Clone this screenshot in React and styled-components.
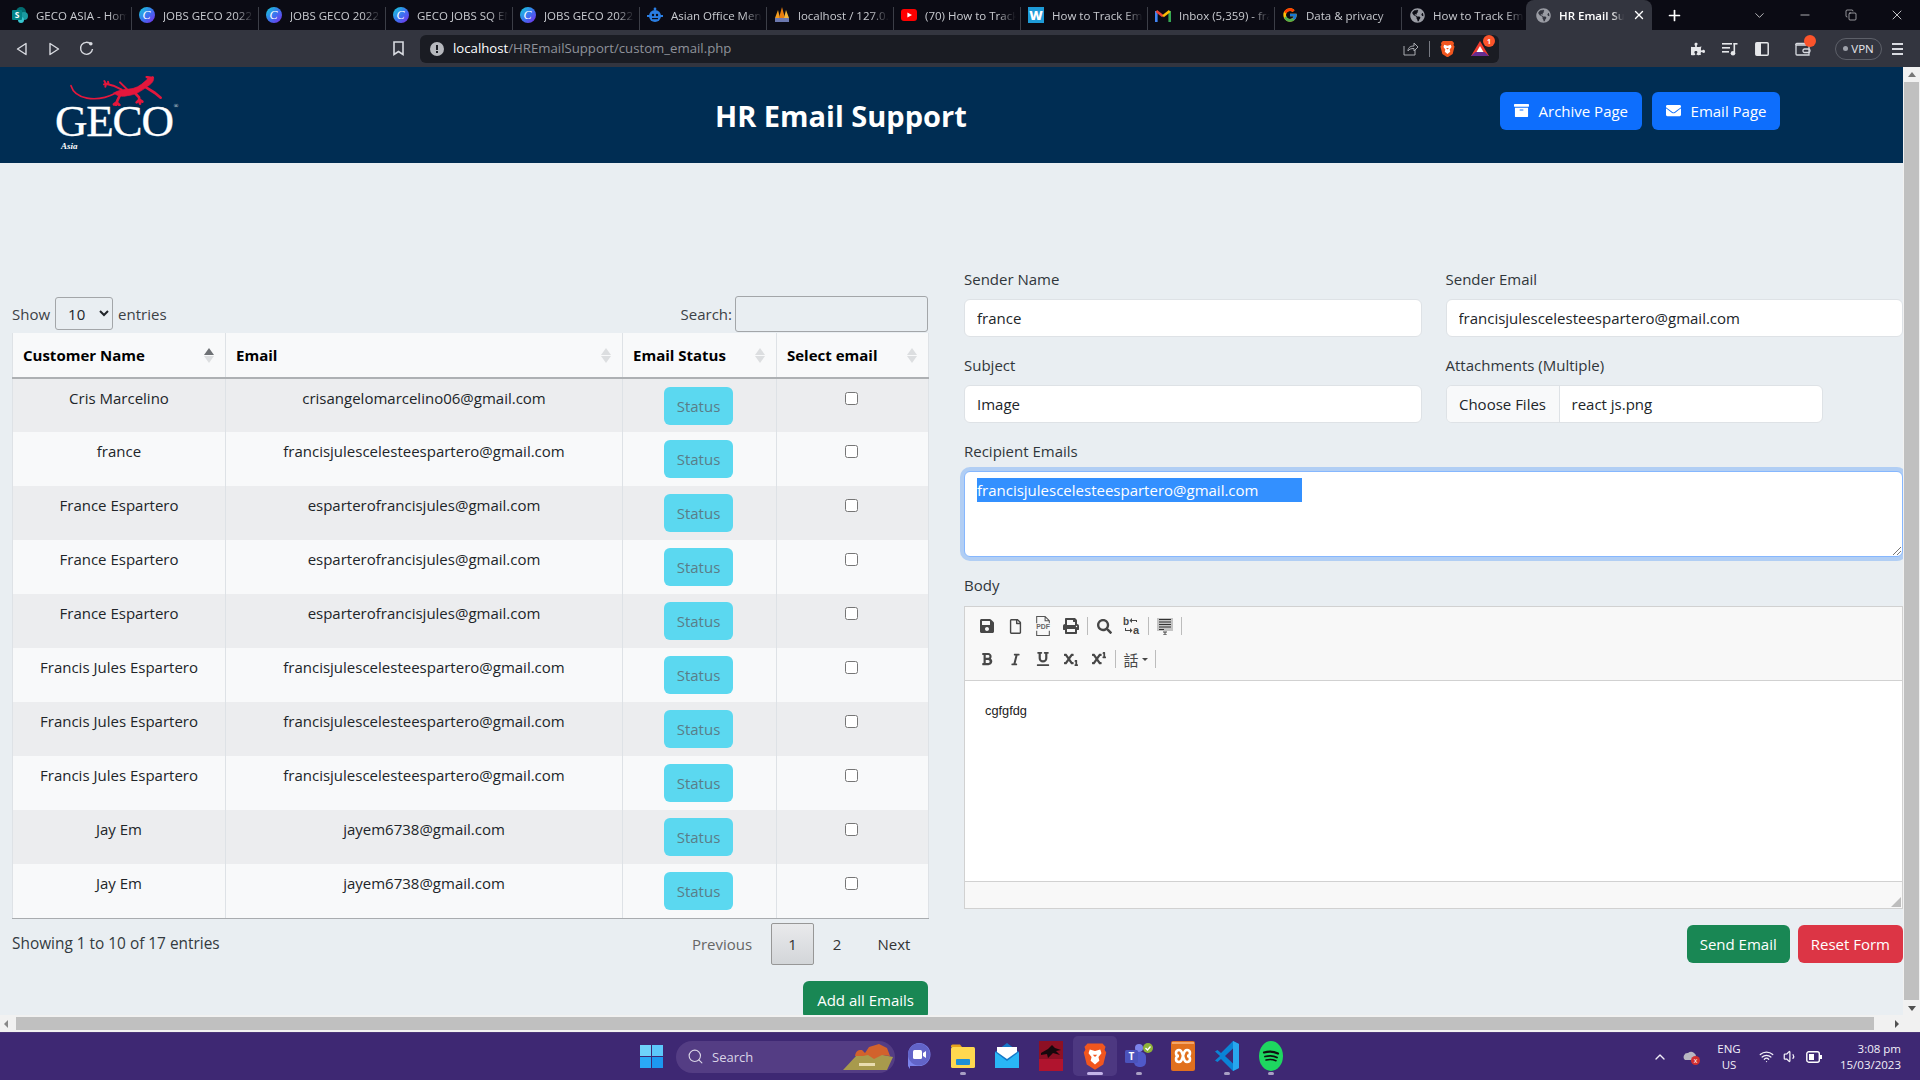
import React from 'react';
import styled, { createGlobalStyle } from 'styled-components';
import { FaGlobeAmericas, FaPuzzlePiece, FaArchive, FaEnvelope, FaSave, FaPrint, FaSearch, FaBold, FaItalic, FaUnderline, FaSubscript, FaSuperscript, FaRegFile } from 'react-icons/fa';
import { FcGoogle } from 'react-icons/fc';
import { Search as SearchIcon, ChevronUp, ChevronDown, Wifi, Volume1, Minus, X, Plus, Copy } from 'lucide-react';

const UI = '"Open Sans", "Noto Sans", sans-serif';

const Global = createGlobalStyle`
  html, body { margin: 0; padding: 0; overflow: hidden; background: #e9eef2; }
  * { box-sizing: border-box; }
  body { font-family: ${UI}; color: #212529; }
`;

const Screen = styled.div`
  width: 1920px; height: 1080px; display: flex; flex-direction: column; overflow: hidden;
`;

/* ---------- browser tabs ---------- */
const TabStrip = styled.div`
  height: 30px; flex: none; display: flex; align-items: stretch; padding-left: 5px; background: #0b0b14;
`;
const Tab = styled.div`
  position: relative; flex: none; width: ${p => p.$active ? 126 : 127}px; display: flex; align-items: center; gap: 8px; padding-left: ${p => p.$active ? 9 : 7}px; padding-right: ${p => p.$active ? '6px' : '5px'};
  margin-left: ${p => p.$active ? -3 : 0}px;
  background: ${p => p.$active ? '#33353f' : 'transparent'};
  border-radius: ${p => p.$active ? '8px 8px 0 0' : '0'};
  color: ${p => p.$active ? '#fff' : '#c9cbd0'};
  font-size: 11.5px; font-weight: ${p => p.$active ? 600 : 400};
  ${p => p.$sep ? `&::after { content: ''; position: absolute; right: 0; top: 7px; bottom: 0; width: 1px; background: #3c3e47; }` : ''}
`;
const TabIcon = styled.span`
  flex: none; width: 16px; height: 16px; display: flex; align-items: center; justify-content: center;
`;
const TabTitle = styled.span`
  flex: 1; min-width: 0; white-space: nowrap; overflow: hidden;
  -webkit-mask-image: linear-gradient(to right, #000 80%, transparent 100%);
  mask-image: linear-gradient(to right, #000 80%, transparent 100%);
`;
const TabClose = styled.span`flex: none; display: flex; color: #fff;`;
const NewTab = styled.span`flex: none; width: 40px; margin-left: 2px; display: flex; align-items: center; justify-content: center; color: #fff;`;
const WindowControls = styled.div`
  margin-left: 42px; display: flex; align-items: center; color: #f0f0f2;
`;
const WinButton = styled.span`width: 46px; display: flex; justify-content: center;`;

/* ---------- browser toolbar ---------- */
const Toolbar = styled.div`
  height: 37px; flex: none; display: flex; align-items: center; background: #33353f; padding-left: 6px; color: #d8dae0;
`;
const ToolIcon = styled.span`
  flex: none; width: ${p => p.$w || 32}px; margin-left: ${p => p.$ml || 0}px; display: flex; align-items: center; justify-content: center; position: relative;
`;
const UrlBar = styled.div`
  flex: none; width: 1079px; height: 28px; margin-left: 10px; border-radius: 6px; background: #1a1c23; display: flex; align-items: center; padding: 0 2px 0 10px;
  font-size: 13.2px; color: #8f929a;
`;
const UrlHost = styled.span`color: #fff;`;
const UrlPath = styled.span`margin: -2px 0 0 9px; flex: 1;`;
const UrlSep = styled.span`width: 1px; height: 16px; background: #777a82; margin: 0 10px;`;
const BadgeDot = styled.span`
  position: absolute; top: ${p => p.$t}px; right: ${p => p.$r}px; width: ${p => p.$s}px; height: ${p => p.$s}px; border-radius: 50%; background: #fb542b; color: #fff; font-size: 7px; font-weight: 700; display: flex; align-items: center; justify-content: center;
`;
const Vpn = styled.span`
  flex: none; width: 47px; height: 22px; margin-left: 16px; border: 1px solid #5d6069; border-radius: 11px; display: flex; align-items: center; justify-content: center; gap: 3px; font-size: 11.5px; color: #e5e6ea;
`;
const VpnDot = styled.i`width: 5px; height: 5px; border-radius: 50%; background: #9ea1aa;`;

/* ---------- viewport ---------- */
const Viewport = styled.div`
  flex: 1; min-height: 0; display: grid; grid-template-columns: 1fr 17px; grid-template-rows: 1fr 17px; background: #f1f1f1;
`;
const Page = styled.div`overflow: hidden; background: #e9eef2; min-height: 0;`;
const VBar = styled.div`
  background: #f1f1f1; display: flex; flex-direction: column; align-items: center; padding: 5px 0 4px; color: #6b6b6b;
`;
const VThumb = styled.div`flex: 1; width: 15px; margin: 5px 0 6px; background: #c0c0c0;`;
const HBar = styled.div`
  background: #f1f1f1; display: flex; align-items: center; padding: 0 4px; color: #6b6b6b;
`;
const HThumb = styled.div`flex: 1; height: 13px; margin: 0 21px 0 8px; background: #c0c0c0;`;
const Corner = styled.div`background: #f1f1f1;`;
const Tri = styled.i`
  width: 0; height: 0; display: block;
  ${p => p.$dir === 'up' ? 'border: 4px solid transparent; border-top: 0; border-bottom: 5px solid #777;' : ''}
  ${p => p.$dir === 'down' ? 'border: 4px solid transparent; border-bottom: 0; border-top: 5px solid #505050;' : ''}
  ${p => p.$dir === 'left' ? 'border: 4px solid transparent; border-left: 0; border-right: 4px solid #888;' : ''}
  ${p => p.$dir === 'right' ? 'border: 4px solid transparent; border-right: 0; border-left: 4px solid #505050;' : ''}
`;

/* ---------- header ---------- */
const Header = styled.header`
  height: 96px; background: #002d53; display: flex; align-items: center; padding-left: 55px; padding-right: 123px;
`;
const Logo = styled.div`width: 125px; height: 76px; margin-top: -3px; display: flex; flex-direction: column; color: #fff; font-family: "Liberation Serif", serif;`;
const LogoWord = styled.div`font-size: 45px; line-height: 30px; height: 30px; letter-spacing: -1.2px; white-space: nowrap; -webkit-text-stroke: 0.35px #fff;`;
const LogoMark = styled.sup`font-size: 6px; line-height: 0; vertical-align: 28px; margin-left: 1px; letter-spacing: 0; -webkit-text-stroke: 0;`;
const LogoSub = styled.div`font-size: 9px; line-height: 10px; font-style: italic; font-weight: 700; margin: 5px 0 0 6px;`;
const LizardSvg = styled.svg`display: block; margin-left: -15px; flex: none;`;
const Title = styled.h1`margin: 2px 0 0 535px; font-size: 29px; line-height: 40px; font-weight: 700; color: #fff; white-space: nowrap;`;
const HeaderActions = styled.div`margin: -9px 0 0 auto; display: flex; gap: 10px;`;
const Btn = styled.button`
  height: 38px; border: 0; border-radius: 6px; padding: 0 ${p => p.$px || 13}px; display: inline-flex; align-items: center; justify-content: center; gap: 10px;
  font: 400 15px/24px ${UI}; color: #fff; white-space: nowrap;
  background: ${p => ({ primary: '#0d6efd', success: '#198754', danger: '#dc3545' }[p.$kind])};
`;

/* ---------- main ---------- */
const Main = styled.main`display: flex; padding-left: 12px;`;
const LeftCol = styled.section`flex: none; width: 916px; padding-top: 134px;`;
const RightCol = styled.section`flex: none; width: 939px; margin-left: 36px; padding-top: 104px;`;

const TableTools = styled.div`display: flex; justify-content: space-between; height: 36px; font-size: 15px;`;
const Inline = styled.label`display: flex; align-items: center; gap: 3px; height: 33px; color: #3c4146;`;
const LenSelect = styled.select`
  width: 58px; height: 33px; margin: 0 2px 0 2px; padding-left: 8px; border: 1px solid #a3a6a9; border-radius: 3px; background: transparent; font: 15px ${UI}; color: #212529;
`;
const SearchBox = styled.input`
  width: 193px; height: 36px; border: 1px solid #a3a6a9; border-radius: 3px; background: transparent;
`;
const Table = styled.table`
  width: 916px; table-layout: fixed; border-collapse: collapse; font-size: 15px;
`;
const Th = styled.th`
  width: ${p => p.$w}px; height: 45px; padding: 0 11px 0 10px; background: #f8f9fa; font-weight: 700; text-align: left; color: #000;
  border-left: 1px solid #dee2e6; border-right: 1px solid #dee2e6; border-bottom: 2px solid #adb0b3;
`;
const ThInner = styled.div`display: flex; align-items: center; justify-content: space-between; white-space: nowrap;`;
const Sorter = styled.span`display: flex; flex-direction: column; gap: 1px;`;
const SortTri = styled.i`
  width: 0; height: 0; display: block; border-left: 5px solid transparent; border-right: 5px solid transparent;
  ${p => p.$up ? 'border-bottom' : 'border-top'}: 7px solid ${p => p.$dark ? '#6e7175' : '#dcdee0'};
`;
const Tr = styled.tr`background: ${p => p.$odd ? '#ecedef' : '#f8f9fa'}; height: 54px;`;
const Td = styled.td`
  padding: 7px 8px 0; vertical-align: top; text-align: center; height: 54px; line-height: 24px;
  border-left: 1px solid #dee2e6; border-right: 1px solid #dee2e6;
  ${p => p.$last ? 'border-bottom: 1px solid #a9acaf;' : ''}
`;
const StatusCell = styled(Td)`padding: 8px 9px 0 7px;`;
const CheckCell = styled(Td)`padding: 13px 10px 0 8px; line-height: 13px;`;
const StatusBtn = styled.button`
  width: 69px; height: 38px; border: 0; border-radius: 6px; background: #5bd8f0; color: #5a7d88; font: 15px ${UI};
`;
const Check = styled.input`width: 13px; height: 13px; margin: 0; display: inline-block;`;

const TableFoot = styled.div`display: flex; justify-content: space-between; padding-top: 4px; height: 46px; font-size: 15px;`;
const Info = styled.div`line-height: 42px; color: #333a40; font-size: 15.4px;`;
const Pager = styled.nav`display: flex; align-items: stretch;`;
const PageBtn = styled.span`
  width: ${p => p.$w}px; height: 42px; margin-right: ${p => p.$mr || 0}px; display: flex; align-items: center; justify-content: center; border-radius: 2px;
  color: ${p => p.$muted ? '#666' : '#333'}; border: 1px solid ${p => p.$cur ? '#979797' : 'transparent'};
  background: ${p => p.$cur ? 'linear-gradient(#e9eaec, #d3d6d9)' : 'transparent'};
`;
const AddRow = styled.div`display: flex; justify-content: flex-end; margin-top: 16px;`;

/* ---------- form ---------- */
const FormGrid = styled.div`display: grid; grid-template-columns: 1fr 1fr; column-gap: 24px; row-gap: 16px;`;
const Field = styled.div`grid-column: ${p => p.$wide ? '1 / -1' : 'auto'}; min-width: 0;`;
const Label = styled.label`display: block; font-size: 15px; line-height: 24px; margin-bottom: ${p => p.$mb || 8}px; color: #30363b;`;
const Input = styled.input`
  display: block; width: 100%; height: 38px; padding: 0 12px; border: 1px solid #dee2e6; border-radius: 6px; background: #fff; font: 15px ${UI}; color: #212529;
`;
const FileBox = styled.div`
  width: 377px; height: 38px; border: 1px solid #dee2e6; border-radius: 6px; background: #fff; display: flex; align-items: center; overflow: hidden; font-size: 15px;
`;
const FileBtn = styled.span`height: 100%; width: 113px; display: flex; align-items: center; justify-content: center; background: #f8f9fa; border-right: 1px solid #dee2e6;`;
const FileName = styled.span`margin-left: 12px;`;
const Recipient = styled.div`
  position: relative; height: 86px; padding: 6px 12px; background: #fff; border: 1px solid #86b7fe; border-radius: 6px; box-shadow: 0 0 0 4px rgba(13,110,253,.25); font-size: 15px; line-height: 24px;
`;
const Selected = styled.span`display: inline-block; width: 325px; background: #3390ff; color: #fff; white-space: nowrap;`;
const Grip = styled.svg`position: absolute; right: 1px; bottom: 1px;`;

const Editor = styled.div`height: 303px; border: 1px solid #d1d1d1; display: flex; flex-direction: column; background: #fff;`;
const EdTools = styled.div`
  height: 74px; flex: none; background: #f8f8f8; border-bottom: 1px solid #d1d1d1; padding: 5px 0 0 8px; display: flex; flex-direction: column; gap: 5px;
`;
const EdRow = styled.div`display: flex; align-items: center; height: 28px;`;
const EdBtn = styled.span`
  width: ${p => p.$w || 28}px; height: 28px; flex: none; display: flex; align-items: center; justify-content: center; gap: 3px; color: #474747; font-family: "Noto Sans CJK SC", sans-serif; font-size: 15px;
`;
const EdSep = styled.i`width: 1px; height: 18px; margin: 0 2px; background: #bcbcbc; flex: none;`;
const EdCaret = styled.i`width: 0; height: 0; border: 3px solid transparent; border-bottom: 0; border-top: 3px solid #474747;`;
const EdBody = styled.div`flex: 1; padding: 20px 20px; font: 12.8px/20px "Liberation Sans", Arial, sans-serif; color: #222;`;
const EdStatus = styled.div`
  position: relative; height: 27px; flex: none; background: #f8f8f8; border-top: 1px solid #d1d1d1; 
`;
const FormActions = styled.div`display: flex; justify-content: flex-end; gap: 8px; margin-top: 16px;`;

/* ---------- taskbar ---------- */
const Taskbar = styled.footer`
  height: 48px; flex: none; background: #3e2873; display: flex; align-items: center; padding-left: 640px; padding-right: 19px; color: #fff; border-top: 1px solid #4a3579;
`;
const StartGrid = styled.div`display: grid; grid-template-columns: 11px 11px; grid-auto-rows: 11px; gap: 1px; flex: none;`;
const StartPane = styled.i`background: ${p => p.$c};`;
const SearchPill = styled.div`
  flex: none; width: 219px; height: 32px; margin-left: 13px; border-radius: 16px; background: #543d84; display: flex; align-items: center; padding-left: 11px; gap: 8px; font-size: 13px; color: #d9d4e6; position: relative; overflow: hidden;
`;
const PillArt = styled.svg`margin-left: auto; margin-right: 2px;`;
const AppSlot = styled.div`
  position: relative; flex: none; width: 44px; height: 40px; display: flex; align-items: center; justify-content: center; border-radius: 5px; margin-top: -1px;
  background: ${p => p.$active ? '#4d3881' : 'transparent'};
`;
const Indicator = styled.i`
  position: absolute; bottom: 1px; left: 50%; transform: translateX(-50%); height: 3px; border-radius: 2px; width: ${p => p.$active ? 16 : 6}px; background: ${p => p.$active ? '#c3b3e8' : '#a99fc4'};
`;
const AppStart = styled.div`flex: none; margin-left: 2px; display: flex;`;
const Tray = styled.div`margin-left: auto; display: flex; align-items: center; font-size: 11.5px; line-height: 16px; color: #f2eff8;`;
const TrayIcon = styled.span`display: flex; width: ${p => p.$w}px; margin-left: ${p => p.$ml || 0}px; justify-content: center;`;
const Lang = styled.div`width: 34px; margin: 0 8px 0 4px; text-align: center;`;
const Clock = styled.div`margin-left: 7px; width: 68px; text-align: right;`;

/* ---------- drawn icons ---------- */
const SharePoint = () => (
  <svg width="16" height="16" viewBox="0 0 16 16"><circle cx="9" cy="5" r="5" fill="#036c70"/><circle cx="12" cy="9" r="4" fill="#1a9ba1"/><circle cx="9" cy="13" r="3" fill="#37c6d0"/><rect x="0" y="3" width="10" height="10" rx="1" fill="#038387"/><text x="5" y="11.3" fontSize="8.5" fontWeight="700" fill="#fff" textAnchor="middle" fontFamily="Open Sans">S</text></svg>
);
const Canva = ({ id }) => (
  <svg width="16" height="16" viewBox="0 0 16 16"><defs><linearGradient id={id} x1="0" y1="0" x2="1" y2="1"><stop offset="0" stopColor="#12d2d8"/><stop offset=".55" stopColor="#3f6df0"/><stop offset="1" stopColor="#7d2ae8"/></linearGradient></defs><circle cx="8" cy="8" r="8" fill={`url(#${id})`}/><text x="7.6" y="12" fontSize="12" fontStyle="italic" fill="#fff" textAnchor="middle" fontFamily="Liberation Serif">C</text></svg>
);
const AsianIcon = () => (
  <svg width="16" height="16" viewBox="0 0 16 16"><circle cx="8" cy="9" r="6" fill="#2a7de1"/><circle cx="8" cy="2" r="1.4" fill="#2a7de1"/><rect x="0" y="8" width="3" height="2" fill="#2a7de1"/><rect x="13" y="8" width="3" height="2" fill="#2a7de1"/><circle cx="6" cy="8" r="1.2" fill="#0b0b14"/><circle cx="10" cy="8" r="1.2" fill="#0b0b14"/><rect x="5" y="11" width="6" height="1.2" fill="#0b0b14"/></svg>
);
const PmaIcon = () => (
  <svg width="16" height="16" viewBox="0 0 16 16"><path d="M1 11 4 3 6 11Z" fill="#f39c1f"/><path d="M5 11 8 0 11 11Z" fill="#e87d0d"/><path d="M10 11 12 3 15 11Z" fill="#f6b73c"/><rect x="1" y="11" width="14" height="4" fill="#6c78af"/></svg>
);
const Youtube = () => (
  <svg width="16" height="12" viewBox="0 0 16 12"><rect width="16" height="12" rx="3" fill="#f00"/><path d="M6.4 3.4 11 6 6.4 8.6Z" fill="#fff"/></svg>
);
const WordIcon = () => (
  <svg width="16" height="16" viewBox="0 0 16 16"><rect width="16" height="16" fill="#1e9bd7"/><text x="8" y="13" fontSize="13" fontWeight="800" fill="#fff" textAnchor="middle" fontFamily="Open Sans">W</text></svg>
);
const Gmail = () => (
  <svg width="16" height="13" viewBox="0 0 16 13" fill="none" strokeWidth="2.6"><path d="M1.3 13V2" stroke="#4285f4"/><path d="M14.7 13V2" stroke="#34a853"/><path d="M1.3 2 8 7.2" stroke="#ea4335"/><path d="M8 7.2 14.7 2" stroke="#fbbc05"/></svg>
);
const Globe = () => <FaGlobeAmericas size={15} color="#9a9ca4" />;
const Back = () => <svg width="12" height="14" viewBox="0 0 12 14" fill="none" stroke="#d8dae0" strokeWidth="1.4" strokeLinejoin="round"><path d="M10 1.5 1.5 7 10 12.5Z"/></svg>;
const Fwd = () => <svg width="12" height="14" viewBox="0 0 12 14" fill="none" stroke="#d8dae0" strokeWidth="1.4" strokeLinejoin="round"><path d="M2 1.5 10.5 7 2 12.5Z"/></svg>;
const Reload = () => <svg width="15" height="15" viewBox="0 0 15 15" fill="none" stroke="#d8dae0" strokeWidth="1.4"><path d="M12 3.3A6 6 0 1 0 13.5 8"/><circle cx="11.8" cy="2.8" r="1.8" fill="#d8dae0" stroke="none"/></svg>;
const Bookmark = () => <svg width="11" height="15" viewBox="0 0 11 15" fill="none" stroke="#d8dae0" strokeWidth="1.6"><path d="M1 1h9v12.5l-4.5-3-4.5 3Z"/></svg>;
const InfoDot = () => <svg width="14" height="14" viewBox="0 0 14 14"><circle cx="7" cy="7" r="7" fill="#b6b8bd"/><rect x="6" y="3" width="2" height="5" fill="#1a1c23"/><rect x="6" y="9" width="2" height="2" fill="#1a1c23"/></svg>;
const Share = () => <svg width="16" height="15" viewBox="0 0 16 15" fill="none" stroke="#a9abb1" strokeWidth="1"><path d="M1 5v9h11V9"/><path d="M5 10c0-4 3-5 6-5V2l4 4-4 4V7.5C8 7.5 6 8 5 10Z"/></svg>;
const BraveLion = ({ s = 16 }) => (
  <svg width={s} height={s * 1.16} viewBox="0 0 16 18.5"><path d="M3 1h10l2 2.2-.6 2L15.5 7l-2 8L8 18.5 2.5 15l-2-8 1.1-1.8L1 3.2Z" fill="#f1561f"/><path d="M4.5 5 8 6 11.5 5l.8 2.5-2 2.5.6 2.5L8 15l-2.9-2.500.6-2.500-2-2.500Z" fill="#fff"/><path d="M6.5 8.5h3L8 10Z" fill="#f1561f"/></svg>
);
const Bat = () => <svg width="18" height="15" viewBox="0 0 18 15"><path d="M9 0 18 15H0Z" fill="#ef3b2d"/><path d="M0 15 4.5 11h9L18 15Z" fill="#662d91"/><path d="M9 5 12.5 11h-7Z" fill="#fff"/></svg>;
const Playlist = () => <svg width="16" height="14" viewBox="0 0 16 14" fill="#e6e7ea"><rect x="0" y="1" width="10" height="1.6"/><rect x="0" y="5" width="8" height="1.6"/><rect x="0" y="9" width="7" height="1.6"/><rect x="11.5" y="1" width="1.6" height="10"/><rect x="11.5" y="1" width="4" height="1.6"/><circle cx="11" cy="11.3" r="2.3"/></svg>;
const SidePanel = () => <svg width="14" height="14" viewBox="0 0 14 14"><rect x=".8" y=".8" width="12.4" height="12.4" rx="1" fill="none" stroke="#e6e7ea" strokeWidth="1.5"/><rect x="1" y="1" width="5" height="12" fill="#e6e7ea"/></svg>;
const Wallet = () => <svg width="16" height="14" viewBox="0 0 16 14" fill="none" stroke="#d8dae0" strokeWidth="1.3"><path d="M1 3h13v10H2a1 1 0 0 1-1-1Z"/><path d="M1 3a1 1 0 0 1 1-1.5h10"/><rect x="8" y="7" width="7" height="3.5" rx="1.5"/></svg>;
const Burger = () => <svg width="11" height="12" viewBox="0 0 11 12" fill="#d8dae0"><rect width="11" height="2"/><rect y="5" width="11" height="2"/><rect y="10" width="11" height="2"/></svg>;

const Lizard = () => (
  <LizardSvg width="160" height="30" viewBox="0 21 480 90" fill="none" stroke="#e4173c" strokeLinecap="round" strokeLinejoin="round">
    <path d="M93 50C104 88 165 104 228 72" strokeWidth="5"/>
    <path d="M222 72C240 60 262 62 280 58C298 54 312 40 325 28L340 24C344 34 335 45 322 52C305 66 285 78 262 80C245 84 232 82 222 72Z" fill="#e4173c" strokeWidth="2"/>
    <path d="M245 62 220 50 198 44M198 44 193 36M198 44 192 46M198 44 196 53M206 46 204 38" strokeWidth="6"/>
    <path d="M262 62 240 40" strokeWidth="6"/>
    <path d="M240 78 232 95 228 108M230 100 222 106M230 100 238 108" strokeWidth="8"/>
    <path d="M285 72 297 85 300 104M298 92 290 100M298 92 307 98" strokeWidth="8"/>
    <path d="M318 55 345 72 362 86" strokeWidth="8"/>
    <path d="M325 30 338 25M332 26 320 24" strokeWidth="7"/>
  </LizardSvg>
);
const PdfIcon = () => (
  <svg width="18" height="20" viewBox="0 0 17 19" fill="none" stroke="#555"><path d="M2.5 7V.5h8l4 4V7M2.5 14v4.5h12V14M10.5.5v4h4"/><text x="8.5" y="12.8" fontSize="6.5" fontWeight="700" stroke="none" fill="#666" textAnchor="middle" fontFamily="Liberation Sans">PDF</text></svg>
);
const Replace = () => (
  <svg width="18" height="18" viewBox="0 0 18 18" fill="#474747"><text x="0" y="8" fontSize="10" fontWeight="700" fontFamily="Liberation Sans">b</text><text x="10" y="17" fontSize="11" fontWeight="700" fontFamily="Liberation Sans">a</text><path d="M9 3h5v2l-1 0v-1H9v2L6.5 3.500 9 1ZM2 11h1v2h4v-2l2.500 2.500L7 16v-2H2Z"/></svg>
);
const SourceIcon = () => (
  <svg width="16" height="17" viewBox="0 0 16 17"><rect width="16" height="13" fill="#c4c4c4"/><path d="M2 1.5h12M2 4h12M2 6.5h12M2 9h12M2 11.5h5" stroke="#222" strokeWidth=".9"/><path d="M6 14h4M8 14v3M6 17h4" stroke="#444" strokeWidth="1"/></svg>
);

const Meet = () => <svg width="24" height="26" viewBox="0 0 24 26"><path d="M12 0a11.5 11.5 0 0 1 0 23H3v3l-2-3V11.5A11.5 11.5 0 0 1 12 0Z" fill="#7b83eb"/><circle cx="12" cy="11.5" r="11" fill="#6264c8"/><rect x="6" y="7" width="9" height="9" rx="1.5" fill="#fff"/><path d="M16 10l3-2v7l-3-2Z" fill="#fff"/></svg>;
const Folder = () => <svg width="24" height="24" viewBox="0 0 24 24"><path d="M0 2a1.5 1.5 0 0 1 1.5-1.5H9L11 3H0Z" fill="#e6a21d"/><rect y="3" width="24" height="21" rx="1.5" fill="#ffd84f"/><rect x="5" y="15" width="14" height="6" rx="1" fill="#1f8fd6"/></svg>;
const Mail = () => <svg width="24" height="26" viewBox="0 0 24 26"><path d="M12 0 24 9v16H0V9Z" fill="#1478c8"/><path d="M2 9 12 16 22 9V4H2Z" fill="#fff"/><path d="M0 9 12 18 24 9v16H0Z" fill="#29b6f6"/></svg>;
const Dragon = () => <svg width="24" height="30" viewBox="0 0 24 30"><rect width="24" height="30" fill="#8d1024"/><rect y="18" width="24" height="12" fill="#b0142e"/><path d="M2 12 9 8l4-4 3 3 6 2-5 1 4 4-7-2-5 5-1-4-6 1Z" fill="#16080c"/></svg>;
const Teams = () => <svg width="28" height="26" viewBox="0 0 28 26"><circle cx="14" cy="5" r="4" fill="#7b83eb"/><rect x="9" y="9" width="12" height="15" rx="5" fill="#5059c9"/><rect x="0" y="7" width="13" height="13" rx="1.5" fill="#4b53bc"/><text x="6.5" y="17" fontSize="10" fontWeight="700" fill="#fff" textAnchor="middle" fontFamily="Open Sans">T</text><circle cx="23" cy="5" r="5" fill="#8fb339"/><path d="M20.5 5l2 2 3-3.5" stroke="#fff" strokeWidth="1.3" fill="none"/></svg>;
const Xampp = () => <svg width="24" height="30" viewBox="0 0 24 30"><rect width="24" height="30" rx="2" fill="#e1701e"/><rect x="1" y="1" width="22" height="2" fill="#f3a56a"/><path d="M8 9c-4 0-4 6 0 6-4 0-4 6 0 6 3 0 3-3 4-6 1 3 1 6 4 6 4 0 4-6 0-6 4 0 4-6 0-6-3 0-3 3-4 6-1-3-1-6-4-6Z" fill="none" stroke="#fff" strokeWidth="2.6"/></svg>;
const VsCode = () => <svg width="24" height="30" viewBox="0 0 24 30"><path d="M18 0 24 3v24l-6 3L6 18l-3.500 3L0 19.500 5 15 0 10.500 2.500 9 6 12Z" fill="#0a84d6"/><path d="M18 0 24 3v24l-6 3Z" fill="#28a7ee"/><path d="M18 7.500 10 15l8 7.500Z" fill="#3e2873"/></svg>;
const Spotify = () => <svg width="24" height="30" viewBox="0 0 24 30" fill="none" stroke="#101010" strokeLinecap="round"><ellipse cx="12" cy="15" rx="12" ry="15" fill="#1ed760" stroke="none"/><path d="M5 11.500c5-1.500 10-1 14 1" strokeWidth="2.200"/><path d="M6 15.500c4-1 9-.8 12 1" strokeWidth="1.800"/><path d="M7 19c3-.8 7-.6 10 .8" strokeWidth="1.500"/></svg>;
const Battery = () => <svg width="16" height="12" viewBox="0 0 16 12"><rect x=".8" y=".8" width="12.5" height="10.4" rx="2" fill="none" stroke="#fff" strokeWidth="1.4"/><rect x="3" y="3" width="5" height="6" fill="#fff"/><rect x="14" y="4" width="2" height="4" fill="#fff"/></svg>;
const OneDrive = () => <svg width="18" height="18" viewBox="0 0 18 18"><path d="M2 12a4 4 0 0 1 3-7 5 5 0 0 1 8 5v2Z" fill="#b9b7c2"/><circle cx="12.5" cy="12.5" r="4.5" fill="#d32f2f"/><text x="12.5" y="15" fontSize="7" fill="#fff" textAnchor="middle" fontFamily="Open Sans">x</text></svg>;
const Desert = () => <PillArt width="50" height="28" viewBox="0 0 50 28"><path d="M0 27 14 12h26l10 2-6 13Z" fill="#a89a4c"/><path d="M12 13c1-6 4-6 7-6l3 3 4-6 10-3 8 4 3 8-8-1-8 4-6-4-5 1Z" fill="#d2622c"/><path d="M16 20h16v3H16Z" fill="#e9dcae"/></PillArt>;

/* ---------- data ---------- */
const tabs = [
  [<SharePoint />, 'GECO ASIA - Home'],
  [<Canva id="c1" />, 'JOBS GECO 2022'],
  [<Canva id="c2" />, 'JOBS GECO 2022'],
  [<Canva id="c3" />, 'GECO JOBS SQ EN'],
  [<Canva id="c4" />, 'JOBS GECO 2022'],
  [<AsianIcon />, 'Asian Office Menu'],
  [<PmaIcon />, 'localhost / 127.0.0.1'],
  [<Youtube />, '(70) How to Track'],
  [<WordIcon />, 'How to Track Email'],
  [<Gmail />, 'Inbox (5,359) - francis'],
  [<FcGoogle size={16} />, 'Data & privacy'],
  [<Globe />, 'How to Track Email'],
];
const JE = 'francisjulescelesteespartero@gmail.com';
const rows = [
  ['Cris Marcelino', 'crisangelomarcelino06@gmail.com'],
  ['france', JE],
  ['France Espartero', 'esparterofrancisjules@gmail.com'],
  ['France Espartero', 'esparterofrancisjules@gmail.com'],
  ['France Espartero', 'esparterofrancisjules@gmail.com'],
  ['Francis Jules Espartero', JE],
  ['Francis Jules Espartero', JE],
  ['Francis Jules Espartero', JE],
  ['Jay Em', 'jayem6738@gmail.com'],
  ['Jay Em', 'jayem6738@gmail.com'],
];
const cols = [['Customer Name', 213, true], ['Email', 397], ['Email Status', 154], ['Select email', 152]];
const apps = [
  [<Meet />, false, false], [<Folder />, true, false], [<Mail />, false, false], [<Dragon />, false, false],
  [<BraveLion s={24} />, true, true], [<Teams />, true, false], [<Xampp />, false, false], [<VsCode />, true, false], [<Spotify />, true, false],
];

export default function App() {
  return (
    <Screen>
      <Global />
      <TabStrip>
        {tabs.map(([icon, title], i) => (
          <Tab key={i} $sep={i < 11}>
            <TabIcon>{icon}</TabIcon>
            <TabTitle>{title}</TabTitle>
          </Tab>
        ))}
        <Tab $active>
          <TabIcon><Globe /></TabIcon>
          <TabTitle>HR Email Support</TabTitle>
          <TabClose><X size={14} strokeWidth={2.4} /></TabClose>
        </Tab>
        <NewTab><Plus size={17} strokeWidth={2.4} /></NewTab>
        <WindowControls>
          <WinButton><ChevronDown size={15} strokeWidth={1.2} /></WinButton>
          <WinButton><Minus size={14} strokeWidth={1.2} /></WinButton>
          <WinButton><Copy size={12} strokeWidth={1.2} /></WinButton>
          <WinButton><X size={16} strokeWidth={1.2} /></WinButton>
        </WindowControls>
      </TabStrip>

      <Toolbar>
        <ToolIcon><Back /></ToolIcon>
        <ToolIcon><Fwd /></ToolIcon>
        <ToolIcon><Reload /></ToolIcon>
        <ToolIcon $w={24} $ml={284}><Bookmark /></ToolIcon>
        <UrlBar>
          <InfoDot />
          <UrlPath><UrlHost>localhost</UrlHost>/HREmailSupport/custom_email.php</UrlPath>
          <Share />
          <UrlSep />
          <BraveLion s={15} />
          <ToolIcon $w={34} $ml={8}>
            <Bat />
            <BadgeDot $t={-6} $r={2} $s={12}>1</BadgeDot>
          </ToolIcon>
        </UrlBar>
        <ToolIcon $ml={183}><FaPuzzlePiece size={14} color="#e6e7ea" /></ToolIcon>
        <ToolIcon><Playlist /></ToolIcon>
        <ToolIcon><SidePanel /></ToolIcon>
        <ToolIcon $ml={9}>
          <Wallet />
          <BadgeDot $t={-7} $r={3} $s={12} />
        </ToolIcon>
        <Vpn><VpnDot />VPN</Vpn>
        <ToolIcon $w={24} $ml={3}><Burger /></ToolIcon>
      </Toolbar>

      <Viewport>
        <Page>
          <Header>
            <Logo>
              <Lizard />
              <LogoWord>GECO<LogoMark>®</LogoMark></LogoWord>
              <LogoSub>Asia</LogoSub>
            </Logo>
            <Title>HR Email Support</Title>
            <HeaderActions>
              <Btn $kind="primary" $px={14}><FaArchive size={15} />Archive Page</Btn>
              <Btn $kind="primary" $px={13.5}><FaEnvelope size={15} />Email Page</Btn>
            </HeaderActions>
          </Header>
          <Main>
            <LeftCol>
              <TableTools>
                <Inline>Show<LenSelect defaultValue="10"><option>10</option><option>25</option></LenSelect>entries</Inline>
                <Inline>Search:<SearchBox /></Inline>
              </TableTools>
              <Table>
                <thead>
                  <tr>
                    {cols.map(([name, w, sorted]) => (
                      <Th key={name} $w={w}>
                        <ThInner>{name}
                          <Sorter><SortTri $up $dark={sorted} /><SortTri /></Sorter>
                        </ThInner>
                      </Th>
                    ))}
                  </tr>
                </thead>
                <tbody>
                  {rows.map(([name, mail], i) => {
                    const last = i === rows.length - 1;
                    return (
                      <Tr key={i} $odd={i % 2 === 0}>
                        <Td $last={last}>{name}</Td>
                        <Td $last={last}>{mail}</Td>
                        <StatusCell $last={last}><StatusBtn>Status</StatusBtn></StatusCell>
                        <CheckCell $last={last}><Check type="checkbox" /></CheckCell>
                      </Tr>
                    );
                  })}
                </tbody>
              </Table>
              <TableFoot>
                <Info>Showing 1 to 10 of 17 entries</Info>
                <Pager>
                  <PageBtn $w={78} $mr={10} $muted>Previous</PageBtn>
                  <PageBtn $w={43} $cur>1</PageBtn>
                  <PageBtn $w={46}>2</PageBtn>
                  <PageBtn $w={68}>Next</PageBtn>
                </Pager>
              </TableFoot>
              <AddRow><Btn $kind="success" $px={14}>Add all Emails</Btn></AddRow>
            </LeftCol>

            <RightCol>
              <FormGrid>
                <Field><Label>Sender Name</Label><Input readOnly value="france" /></Field>
                <Field><Label>Sender Email</Label><Input readOnly value={JE} /></Field>
                <Field><Label>Subject</Label><Input readOnly value="Image" /></Field>
                <Field><Label>Attachments (Multiple)</Label>
                  <FileBox><FileBtn>Choose Files</FileBtn><FileName>react js.png</FileName></FileBox>
                </Field>
                <Field $wide><Label>Recipient Emails</Label>
                  <Recipient>
                    <Selected>{JE}</Selected>
                    <Grip width="9" height="9" viewBox="0 0 9 9" stroke="#777"><path d="M1 9 9 1M5 9l4-4"/></Grip>
                  </Recipient>
                </Field>
                <Field $wide><Label $mb={9}>Body</Label>
                  <Editor>
                    <EdTools>
                      <EdRow>
                        <EdBtn><FaSave size={16} /></EdBtn>
                        <EdBtn><FaRegFile size={15} /></EdBtn>
                        <EdBtn><PdfIcon /></EdBtn>
                        <EdBtn><FaPrint size={16} /></EdBtn>
                        <EdSep />
                        <EdBtn><FaSearch size={15} /></EdBtn>
                        <EdBtn><Replace /></EdBtn>
                        <EdSep />
                        <EdBtn><SourceIcon /></EdBtn>
                        <EdSep />
                      </EdRow>
                      <EdRow>
                        <EdBtn><FaBold size={14} /></EdBtn>
                        <EdBtn><FaItalic size={13} /></EdBtn>
                        <EdBtn><FaUnderline size={14} /></EdBtn>
                        <EdBtn><FaSubscript size={14} /></EdBtn>
                        <EdBtn><FaSuperscript size={14} /></EdBtn>
                        <EdSep />
                        <EdBtn $w={35}>話<EdCaret /></EdBtn>
                        <EdSep />
                      </EdRow>
                    </EdTools>
                    <EdBody>cgfgfdg</EdBody>
                    <EdStatus>
                      <Grip width="10" height="10" viewBox="0 0 10 10" fill="#bdbdbd"><path d="M10 0v10H0Z"/></Grip>
                    </EdStatus>
                  </Editor>
                </Field>
              </FormGrid>
              <FormActions>
                <Btn $kind="success">Send Email</Btn>
                <Btn $kind="danger">Reset Form</Btn>
              </FormActions>
            </RightCol>
          </Main>
        </Page>
        <VBar>
          <Tri $dir="up" />
          <VThumb />
          <Tri $dir="down" />
        </VBar>
        <HBar>
          <Tri $dir="left" />
          <HThumb />
          <Tri $dir="right" />
        </HBar>
        <Corner />
      </Viewport>

      <Taskbar>
        <StartGrid>
          <StartPane $c="#6fd3fb" /><StartPane $c="#5cc8fa" />
          <StartPane $c="#2aa9f6" /><StartPane $c="#1c97f0" />
        </StartGrid>
        <SearchPill>
          <SearchIcon size={17} strokeWidth={1.6} />Search<Desert />
        </SearchPill>
        <AppStart>
          {apps.map(([icon, dot, active], i) => (
            <AppSlot key={i} $active={active}>{icon}{dot && <Indicator $active={active} />}</AppSlot>
          ))}
        </AppStart>
        <Tray>
          <TrayIcon $w={20}><ChevronUp size={16} strokeWidth={2} /></TrayIcon>
          <TrayIcon $w={32} $ml={6}><OneDrive /></TrayIcon>
          <Lang>ENG<br />US</Lang>
          <TrayIcon $w={24}><Wifi size={15} /></TrayIcon>
          <TrayIcon $w={24}><Volume1 size={15} /></TrayIcon>
          <TrayIcon $w={24}><Battery /></TrayIcon>
          <Clock>3:08 pm<br />15/03/2023</Clock>
        </Tray>
      </Taskbar>
    </Screen>
  );
}
